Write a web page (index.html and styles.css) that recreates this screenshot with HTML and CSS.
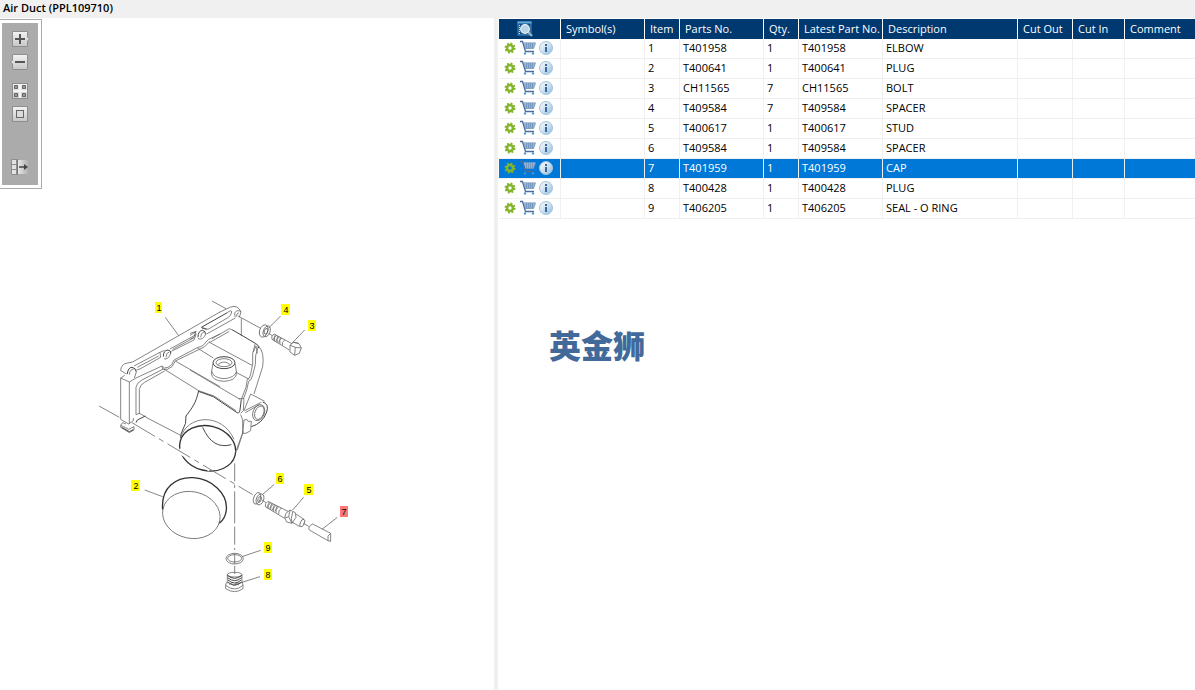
FILE: index.html
```html
<!DOCTYPE html>
<html lang="en">
<head>
    <meta charset="UTF-8">
    <meta name="viewport" content="width=device-width, initial-scale=1.0">
    <title>Air Duct (PPL109710)</title>
    <link rel="stylesheet" href="styles.css">
</head>
<body>
    <svg class="sprite" aria-hidden="true">
        <defs>
            <linearGradient id="btn-fill" x1="0" y1="0" x2="0" y2="1">
                <stop offset="0" stop-color="#f4f4f4"/>
                <stop offset="1" stop-color="#c6c6c6"/>
            </linearGradient>
            <linearGradient id="fade-fill">
                <stop offset="0" stop-color="#eeeeee"/>
                <stop offset="1" stop-color="#ababab"/>
            </linearGradient>
            <linearGradient id="info-fill" x1="0" y1="0" x2="1" y2="1">
                <stop offset="0.3" stop-color="#e4eef6"/>
                <stop offset="1" stop-color="#8fbbdc"/>
            </linearGradient>
        </defs>
        <symbol id="icon-gear" viewBox="0 0 16 16">
            <circle cx="8" cy="8" r="4.6" fill="none" stroke="#82b52b" stroke-width="1.8" stroke-dasharray="1.9 1.71"/>
            <circle cx="8" cy="8" r="3" fill="none" stroke="#82b52b" stroke-width="2.6"/>
        </symbol>
        <symbol id="icon-cart" viewBox="0 0 16 16">
            <path d="M3.5 2.5H15.5L13.5 8.5H5.5Z" fill="#b9cde3"/>
            <path d="M3.5 3H15.5L13.5 8.5H5M4 5H15M5 7H14M6.5 3V8M8.5 3V8M10.5 3V8M12.5 3V8" fill="none" stroke="#6b90bb" stroke-width="0.8"/>
            <path d="M0 1.5H2.5L5.5 11.5H14" fill="none" stroke="#4a6d9c" stroke-width="1.3"/>
            <circle cx="5" cy="13.4" r="1.2" fill="#4e96cf"/>
            <circle cx="13" cy="13.4" r="1.2" fill="#4e96cf"/>
        </symbol>
        <symbol id="icon-info" viewBox="0 0 16 16">
            <circle cx="8" cy="8" r="6.5" fill="url(#info-fill)" stroke="#a3c6e0"/>
            <path d="M7 4H9V6H7ZM7 7H9V12H7Z" fill="#3c6aa0"/>
        </symbol>
    </svg>

    <h1 class="title">Air Duct (PPL109710)</h1>

    <main class="panes">
        <section class="drawing-pane">
            <svg class="drawing" viewBox="0 18 494 672" preserveAspectRatio="xMinYMin" role="img" aria-label="Air duct exploded view">
                <!-- mounting flange -->
                <g class="lines" transform="translate(90 290) scale(.3333)">
                    <path d="M226 82L266 137M366 33L408 56"/>
                    <path d="M92 242Q93 222 112 219L128 216L390 66M92 242L110 252"/>
                    <path class="bold" d="M112 252Q114 232 126 232Q138 234 139 246"/>
                    <path d="M118 254Q120 238 130 238M139 246L133 264"/>
                    <path d="M132 228L210 187L212 202L150 237L139 240M142 232L206 198M210 187L224 181"/>
                    <path class="bold" d="M220 200Q220 181 234 180Q244 182 242 190"/>
                    <path d="M222 206Q234 212 243 188M228 202Q228 188 238 186M240 177L318 134L316 124M318 134L312 150L244 184M248 178L312 143"/>
                    <path class="bold" d="M324 142Q324 122 338 121Q348 124 346 132"/>
                    <path d="M324 146Q340 152 348 130M332 142Q332 128 342 126"/>
                    <path d="M138 264L216 228Q222 238 234 232Q248 226 252 210L322 173Q342 168 348 156L356 148L390 132"/>
                    <path d="M216 228L218 238Q232 242 246 230L256 213L326 179Q344 174 360 154"/>
                    <path d="M92 264L104 256M92 264L118 276L138 264M92 264V388L116 402L130 392V384M118 276V402"/>
                    <path d="M138 374V292Q140 278 156 270L218 238M148 372V298Q150 284 164 277L224 243M138 374L148 370L170 382"/>
                    <path d="M92 406L98 398L108 402M92 406L116 418L132 410V420L118 428L92 412Z"/>
                    <path class="bold" d="M95 412L118 425L130 419M138 398L142 390L166 378"/>
                    <path d="M168 382L272 436M27 348L88 382"/>
                    <path d="M220 236L326 302M256 213L390 290M322 174L370 204"/>
                    <path class="bold" d="M326 302C318 340 306 354 288 378Q290 402 278 420Q272 430 272 444"/>
                    <path d="M326 302L372 318L438 362"/>
                </g>
                <!-- housing -->
                <g class="lines" transform="translate(190 290) scale(.3333)">
                    <path d="M88 67L122 51Q144 44 153 66L148 82M136 82Q130 66 142 62Q152 62 153 66M140 80Q138 70 147 68"/>
                    <path class="bold" d="M34 112L112 68M36 114L50 118"/>
                    <path d="M112 68Q124 58 125 66Q124 78 112 84L54 118L34 112M0 130L20 124M50 132L136 84M154 85V138"/>
                    <path d="M66 146L118 116L132 122M58 158L118 124M0 136L16 126L12 142L0 148"/>
                    <path class="bold" d="M128 120L196 160Q206 164 206 174"/>
                    <path d="M196 160Q184 190 188 222L182 252Q180 268 172 268L168 292L154 328M204 172Q194 196 196 224L188 256Q184 272 176 274L170 300L160 328"/>
                    <path d="M190 186L198 168L202 190M206 168Q224 188 218 230L192 312"/>
                    <path d="M60 158L186 226M140 248L178 268M0 240L150 328M146 326H162"/>
                    <path class="bold" d="M25 304L70 320L138 366Q148 374 150 360L154 328"/>
                    <path d="M152 370L160 362L162 328"/>
                    <ellipse class="bold" cx="102" cy="218" rx="33" ry="18"/>
                    <ellipse cx="102" cy="218" rx="24" ry="12"/>
                    <path d="M84 224Q102 208 120 224M69 220L64 250Q66 273 102 274Q138 272 140 250L135 220M65 244Q70 264 102 266Q134 264 140 244"/>
                    <path d="M162 362L182 312L224 334M164 362L214 337M166 368L208 344"/>
                    <path class="bold" d="M218 336Q238 342 230 366Q218 400 184 410"/>
                    <ellipse cx="206" cy="368" rx="17" ry="25" transform="rotate(22 206 368)"/>
                    <ellipse cx="208" cy="368" rx="13" ry="21" transform="rotate(22 208 368)"/>
                    <path d="M162 390L170 388L174 394L184 394L182 422L168 430L158 430ZM158 430L142 480M152 374L158 390V430"/>
                    <!-- bolt 3, washer 4 -->
                    <path d="M144 78L212 115M236 130L248 138M272 78L234 116M344 120L304 162"/>
                    <ellipse cx="221" cy="123" rx="12" ry="19" transform="rotate(20 221 123)"/>
                    <ellipse cx="230" cy="124" rx="10" ry="17" transform="rotate(20 230 124)"/>
                    <ellipse cx="228" cy="124" rx="5" ry="9" transform="rotate(20 228 124)"/>
                    <path d="M252 132L304 160M246 148L298 180M252 132Q242 138 246 148M260 136Q250 142 254 154M268 140Q258 146 262 158M276 144Q266 150 270 162M284 150Q274 156 278 166M256 134l-6 16M264 138l-6 16M272 142l-6 16"/>
                    <path d="M300 166L310 157L326 160L334 174L328 190L314 196L300 186ZM310 157L326 160M300 166L316 172L334 174M316 172L314 196"/>
                </g>
                <!-- duct opening and cap -->
                <g class="lines" transform="translate(130 410) scale(.3333)">
                    <ellipse class="heavy" cx="233" cy="115" rx="85" ry="67" transform="rotate(14 233 115)"/>
                    <path class="gap" d="M146 122L240 177"/>
                    <path d="M152 84C170 14 276 6 312 88M340 64L316 128"/>
                    <path class="bold" d="M218 52Q248 120 304 104"/>
                    <path d="M6 38L368 254" stroke-dasharray="80 14 16 14"/>
                    <path d="M314 160V420" stroke-dasharray="54 10 10 10 96 10"/>
                    <ellipse cx="184" cy="315" rx="87" ry="70" transform="rotate(12 184 315)"/>
                    <path class="heavy" d="M98 298C92 232 140 200 190 203C244 206 294 250 289 300Q286 326 268 340"/>
                    <path d="M44 240L98 260"/>
                </g>
                <!-- washer 6, stud 5, cap 7, seal 9, plug 8 -->
                <g class="lines" transform="translate(220 460) scale(.3333)">
                    <path d="M163 73L128 103M251 112L218 150M352 172L306 208M122 271L66 290M120 350L44 374"/>
                    <ellipse cx="111" cy="115" rx="10" ry="18" transform="rotate(20 111 115)"/>
                    <ellipse cx="120" cy="118" rx="11" ry="17" transform="rotate(20 120 118)"/>
                    <ellipse cx="119" cy="118" rx="5" ry="9" transform="rotate(20 119 118)"/>
                    <path d="M126 120L138 128M144 124L204 154M136 140L192 174M144 124Q134 130 136 140M152 128Q142 136 144 146M160 132Q150 140 152 150M168 136Q158 144 160 154M176 140Q166 148 168 158M184 144Q174 152 176 163M148 126l-7 16M156 130l-7 16M164 134l-7 16M172 138l-7 16"/>
                    <path d="M198 160L210 150L226 158L228 172L216 190L200 186L194 174ZM210 150L206 170L216 190M206 170L194 174M218 156L214 176L216 188M228 162L252 178M216 186L240 200"/>
                    <ellipse cx="247" cy="189" rx="6" ry="12" transform="rotate(24 247 189)"/>
                    <path d="M250 190L266 199M278 192L332 220V244L324 242L268 210Q262 200 278 192M332 220L324 228V242"/>
                    <path d="M44 280V312M44 318V342"/>
                    <ellipse cx="44" cy="296" rx="26" ry="16"/>
                    <ellipse cx="44" cy="295" rx="21" ry="11"/>
                    <ellipse cx="44" cy="344" rx="22" ry="7"/>
                    <path class="bold" d="M22 346Q44 364 66 346M23 353Q44 371 65 353M24 360Q44 378 64 360M24 367Q44 384 64 367"/>
                    <path d="M22 344V370M66 344V370M22 366Q16 372 17 376V386Q44 404 69 386V376Q68 370 66 366M17 376Q44 398 69 376M28 374l6 -5l6 8l8 -6l8 4"/>
                </g>
                <g class="callouts">
                    <rect x="155" y="302" width="7" height="11"/><text x="159" y="311">1</text>
                    <rect x="281" y="304" width="9" height="11"/><text x="286" y="313">4</text>
                    <rect x="308" y="320" width="8" height="11"/><text x="312" y="329">3</text>
                    <rect x="131" y="480" width="9" height="11"/><text x="136" y="489">2</text>
                    <rect x="276" y="473" width="8" height="11"/><text x="280" y="482">6</text>
                    <rect x="304" y="484" width="9" height="11"/><text x="309" y="493">5</text>
                    <rect class="selected" x="340" y="506" width="8" height="11"/><text x="344" y="515">7</text>
                    <rect x="264" y="542" width="8" height="11"/><text x="268" y="551">9</text>
                    <rect x="264" y="569" width="8" height="11"/><text x="268" y="578">8</text>
                </g>
            </svg>

            <div class="toolbar">
                <div class="tool-group">
                    <button class="tool" type="button" aria-label="Zoom in">
                        <svg viewBox="0 0 16 16"><path d="M.5 .5H15.5V6L17.5 8L15.5 10V15.5H.5Z" fill="url(#btn-fill)" stroke="#8e8e8e"/><path d="M3 8H13M8 3V13" stroke="#555" stroke-width="2"/></svg>
                    </button>
                    <button class="tool" type="button" aria-label="Zoom out">
                        <svg viewBox="0 0 16 16"><path d="M.5 .5H15.5V15.5H.5V10L-1.5 8L.5 6Z" fill="url(#btn-fill)" stroke="#8e8e8e"/><path d="M3 8H13" stroke="#555" stroke-width="2"/></svg>
                    </button>
                </div>
                <div class="tool-group">
                    <button class="tool" type="button" aria-label="Fit to window">
                        <svg viewBox="0 0 16 16"><rect x=".5" y=".5" width="15" height="15" fill="url(#btn-fill)" stroke="#8e8e8e"/><path d="M8 1V15M1 8H15" stroke="#f4f4f4" stroke-width="2"/><path d="M2.5 2.5h3v3h-3zM10.5 2.5h3v3h-3zM2.5 10.5h3v3h-3zM10.5 10.5h3v3h-3z" fill="#999" stroke="#666"/></svg>
                    </button>
                    <button class="tool" type="button" aria-label="Actual size">
                        <svg viewBox="0 0 16 16"><rect x=".5" y=".5" width="15" height="15" fill="url(#btn-fill)" stroke="#8e8e8e"/><rect x="4.5" y="4.5" width="7" height="7" fill="#dcdcdc" stroke="#666"/></svg>
                    </button>
                </div>
                <div class="tool-group tool-group-last">
                    <button class="tool" type="button" aria-label="Hide list">
                        <svg viewBox="0 0 16 16"><rect x="5" y="1" width="12" height="14" fill="url(#fade-fill)"/><path d="M-.5 .5H4.5V15.5H-.5ZM-.5 5.5H4.5M-.5 10.5H4.5" fill="#e2e2e2" stroke="#8e8e8e"/><path d="M5.5 0V16" stroke="#777"/><path d="M7 8H13" stroke="#444" stroke-width="1.5"/><path d="M12 5L16 8L12 11Z" fill="#444"/></svg>
                    </button>
                </div>
            </div>
        </section>

        <div class="splitter"></div>

        <section class="parts-pane">
            <table class="parts">
                <colgroup>
                    <col class="col-actions">
                    <col class="col-wide">
                    <col class="col-small">
                    <col class="col-wide">
                    <col class="col-small">
                    <col class="col-wide">
                    <col class="col-description">
                    <col class="col-cut-out">
                    <col class="col-cut-in">
                    <col>
                </colgroup>
                <thead>
                    <tr>
                        <th class="find">
                            <button class="icon" type="button" aria-label="Find">
                                <svg viewBox="0 0 16 16"><rect x="1" y="1" width="13" height="13" fill="#164f86" stroke="#4990c4"/><path d="M.5 1.5H14.5" stroke="#5fa8d8" stroke-width="2"/><path d="M2.5 4V14" stroke="#dcebf5" stroke-dasharray="1 1"/><path d="M11 11L15 15" stroke="#8fb3cf" stroke-width="2.4"/><circle cx="8" cy="8" r="4.3" fill="#b9d3e6" stroke="#e6eef4" stroke-width="1.3"/></svg>
                            </button>
                        </th>
                        <th>Symbol(s)</th>
                        <th>Item</th>
                        <th>Parts No.</th>
                        <th>Qty.</th>
                        <th>Latest Part No.</th>
                        <th>Description</th>
                        <th>Cut Out</th>
                        <th>Cut In</th>
                        <th>Comment</th>
                    </tr>
                </thead>
                <tbody id="parts-body"></tbody>
            </table>
            <p class="brand" lang="zh-CN">英金狮</p>
        </section>
    </main>

    <script src="parts.js"></script>
</body>
</html>
```
FILE: styles.css
```css
* {
    margin: 0;
    padding: 0;
    box-sizing: border-box;
}

body {
    display: flex;
    flex-direction: column;
    min-height: 100vh;
    background: #f0f0f0;
    color: #000;
    font-family: "Segoe UI", "Open Sans", sans-serif;
    font-size: 11px;
    line-height: 18px;
}

button {
    border: 0;
    background: none;
    cursor: pointer;
}

/* kept rendered (not display: none) so the gradients still resolve */
.sprite {
    position: absolute;
    width: 0;
    height: 0;
}

.title {
    padding: 0 3px 2px;
    font-size: 11px;
    font-weight: 600;
    line-height: 16px;
}

.panes {
    flex: 1;
    display: grid;
    grid-template-columns: minmax(0, 494fr) 4px minmax(0, 697fr);
}

/* drawing */
.drawing-pane {
    position: relative;
    background: #fff;
}

.drawing {
    display: block;
    width: 100%;
}

.lines {
    fill: none;
    stroke: #666;
    stroke-width: 2.4;
}

.lines .bold {
    stroke: #444;
    stroke-width: 3;
}

.lines .heavy {
    stroke: #333;
    stroke-width: 4;
}

.lines .gap {
    stroke: #fff;
    stroke-width: 16;
}

.callouts rect {
    fill: #ff0;
}

.callouts .selected {
    fill: #f77;
}

.callouts text {
    font-family: Arial, "Liberation Sans", sans-serif;
    font-size: 9px;
    text-anchor: middle;
}

/* floats over the top left corner of the drawing */
.toolbar {
    position: absolute;
    top: 1px;
    left: 0;
    padding: 3px 3px 3px 2px;
    border: 1px solid #aaa;
    border-left: 0;
    background: #fff;
}

.tool-group {
    display: flex;
    flex-direction: column;
    align-items: center;
    gap: 7px;
    width: 36px;
    padding: 8px 0 5px;
    background: #ababab;
}

.tool-group-last {
    padding: 32px 0 10px;
}

.tool {
    width: 16px;
    height: 16px;
}

.tool svg,
.icon svg {
    display: block;
    width: 16px;
    height: 16px;
    overflow: visible;
}

/* parts list */
.parts-pane {
    padding: 1px 0 0 1px;
    background: #fff;
}

.parts {
    width: 100%;
    table-layout: fixed;
    border-collapse: separate;
    border-spacing: 0;
}

.col-actions {
    width: 62px;
}

.col-small {
    width: 35px;
}

.col-wide {
    width: 84px;
}

.col-description {
    width: 135px;
}

.col-cut-out {
    width: 55px;
}

.col-cut-in {
    width: 52px;
}

.parts th,
.parts td {
    height: 20px;
    text-align: left;
    white-space: nowrap;
}

.parts th {
    padding: 0 0 0 5px;
    border-right: 1px solid #fff;
    background: #003870;
    color: #fff;
    font-weight: normal;
}

.parts td {
    padding: 0 0 1px 3px;
    border-right: 1px solid #f0f0f0;
    border-bottom: 1px solid #f0f0f0;
}

.parts th:last-child,
.parts td:last-child {
    border-right: 0;
}

.parts .find {
    padding-left: 18px;
}

.parts .selected td {
    background: #0078d7;
    color: #fff;
}

.actions {
    display: flex;
    gap: 2px;
}

.icon {
    display: block;
    width: 16px;
    height: 16px;
}

.brand {
    margin: 107px 0 0 50px;
    color: #41699a;
    font-family: "Noto Sans CJK SC", sans-serif;
    font-size: 32px;
    font-weight: 900;
    line-height: 36px;
}
```
FILE: parts.js
```js
const parts = [
    { item: 1, partNo: 'T401958', qty: 1, description: 'ELBOW' },
    { item: 2, partNo: 'T400641', qty: 1, description: 'PLUG' },
    { item: 3, partNo: 'CH11565', qty: 7, description: 'BOLT' },
    { item: 4, partNo: 'T409584', qty: 7, description: 'SPACER' },
    { item: 5, partNo: 'T400617', qty: 1, description: 'STUD' },
    { item: 6, partNo: 'T409584', qty: 1, description: 'SPACER' },
    { item: 7, partNo: 'T401959', qty: 1, description: 'CAP' },
    { item: 8, partNo: 'T400428', qty: 1, description: 'PLUG' },
    { item: 9, partNo: 'T406205', qty: 1, description: 'SEAL - O RING' }
];
const selectedItem = 7;

function iconButton(icon, label) {
    return `<button class="icon" type="button" aria-label="${label}"><svg><use href="#icon-${icon}"/></svg></button>`;
}

document.getElementById('parts-body').innerHTML = parts.map(part => `
    <tr class="${part.item === selectedItem ? 'selected' : ''}">
        <td>
            <div class="actions">
                ${iconButton('gear', 'Options')}
                ${iconButton('cart', 'Add to cart')}
                ${iconButton('info', 'Information')}
            </div>
        </td>
        <td></td>
        <td>${part.item}</td>
        <td>${part.partNo}</td>
        <td>${part.qty}</td>
        <td>${part.partNo}</td>
        <td>${part.description}</td>
        <td></td>
        <td></td>
        <td></td>
    </tr>
`).join('');
```
